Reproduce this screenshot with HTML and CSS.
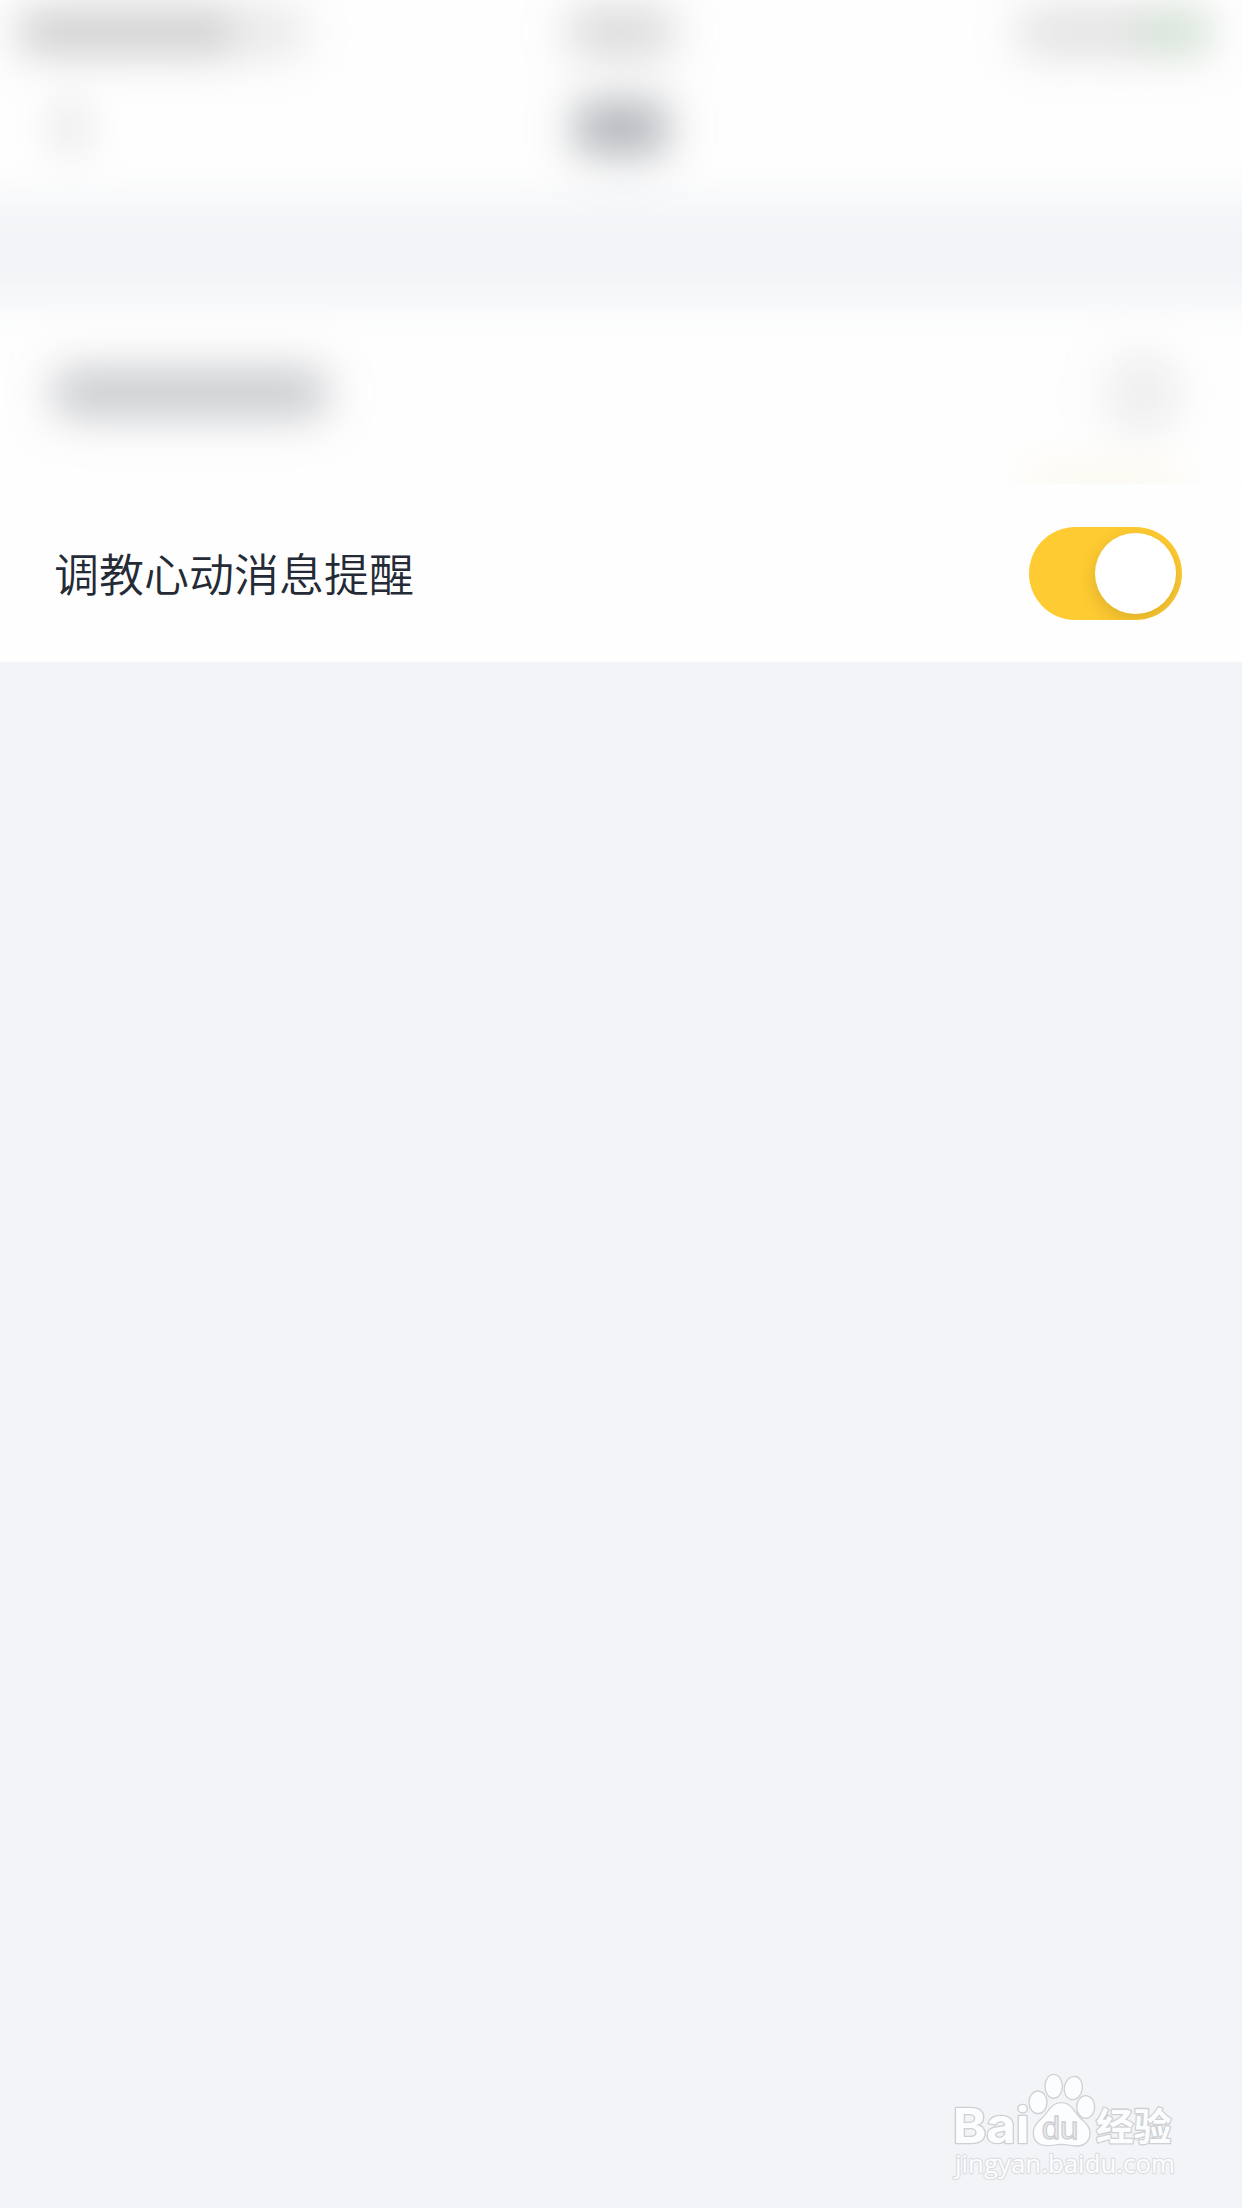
FILE: index.html
```
<!DOCTYPE html>
<html lang="zh-CN">
<head>
    <meta charset="UTF-8">
    <meta name="viewport" content="width=device-width, initial-scale=1.0">
    <title>消息提醒</title>
    <link rel="stylesheet" href="styles.css">
</head>
<body>
    <div class="page">
        <!-- Blurred top area -->
        <div class="frosted">
            <div class="frosted-content">
                <div class="status-bar">
                    <div class="status-left">
                        <span class="smudge carrier"></span>
                        <span class="smudge network"></span>
                    </div>
                    <span class="smudge time"></span>
                    <div class="status-right">
                        <span class="smudge signal"></span>
                        <span class="smudge battery"></span>
                    </div>
                </div>
                <div class="nav-bar">
                    <span class="smudge back"></span>
                    <span class="smudge title"></span>
                    <span class="nav-space"></span>
                </div>
                <div class="gap"></div>
                <div class="hidden-row">
                    <span class="smudge row-label"></span>
                    <span class="smudge row-knob"></span>
                </div>
                <div class="glow"></div>
            </div>
        </div>

        <!-- Setting row -->
        <div class="row">
            <span class="label">调教心动消息提醒</span>
            <div class="switch">
                <div class="knob"></div>
            </div>
        </div>

        <!-- Watermark -->
        <svg class="watermark" viewBox="0 0 810 450">
            <g class="mark">
                <text class="bai" x="68" y="279" textLength="231" lengthAdjust="spacingAndGlyphs">Bai</text>
                <ellipse cx="324" cy="157" rx="25" ry="32"/>
                <ellipse cx="371" cy="109" rx="24" ry="34"/>
                <ellipse cx="430" cy="114" rx="25" ry="33" transform="rotate(10 430 114)"/>
                <ellipse cx="467" cy="171" rx="25" ry="32"/>
                <path d="M394 160 C421 160 431 184 447 203 C465 220 478 229 478 250 C478 274 461 287 438 286 C421 285 411 281 395 281 C379 281 369 285 350 285 C327 285 312 272 312 249 C312 227 326 217 341 202 C358 184 367 160 394 160 Z"/>
                <text class="jingyan" x="498" y="270" textLength="226" lengthAdjust="spacingAndGlyphs">经验</text>
                <text class="url" x="75" y="370" textLength="660" lengthAdjust="spacingAndGlyphs">jingyan.baidu.com</text>
            </g>
            <text class="du" x="335" y="267" textLength="110" lengthAdjust="spacingAndGlyphs">du</text>
        </svg>
    </div>
</body>
</html>
```
FILE: styles.css
```
body {
    margin: 0;
    padding: 0;
    background-color: #f2f4f8;
    font-family: "Noto Sans CJK SC", sans-serif;
}

.page {
    position: relative;
    height: 2208px;
    overflow: hidden;
}

.frosted {
    height: 483px;
    overflow: hidden;
    border-bottom: 1px solid #fbfbfb;
    background-color: #fefefe;
}

.frosted-content {
    filter: blur(20px);
}

.smudge {
    display: block;
    border-radius: 10px;
    box-shadow: 0 0 30px 14px rgba(80, 84, 92, 0.06);
}

.status-bar {
    display: grid;
    grid-template-columns: 1fr auto 1fr;
    align-items: center;
    height: 64px;
    padding: 0 22px;
}

.status-left,
.status-right {
    display: flex;
    align-items: center;
}

.status-right {
    justify-content: flex-end;
    padding-right: 14px;
}

.carrier {
    width: 206px;
    height: 38px;
    background-color: #cbcbcb;
}

.network {
    width: 70px;
    height: 34px;
    background-color: #e6e6e6;
}

.time {
    width: 96px;
    height: 40px;
    background-color: #d8d8d8;
}

.signal {
    width: 120px;
    height: 34px;
    background-color: #dedede;
}

.battery {
    width: 62px;
    height: 38px;
    background-color: #cedfcf;
}

.nav-bar {
    display: flex;
    align-items: center;
    justify-content: space-between;
    box-sizing: border-box;
    height: 134px;
    padding: 0 58px 6px;
}

.back,
.nav-space {
    width: 24px;
}

.back {
    height: 48px;
    background-color: #dfe1e1;
    box-shadow: 0 0 20px 8px rgba(80, 84, 92, 0.03);
}

.title {
    width: 88px;
    height: 50px;
    background-color: #b1b4b9;
}

/* wider than the page so that the blur doesn't fade its ends */
.gap {
    height: 104px;
    margin: 0 -80px;
    background-color: #f2f4f7;
}

.hidden-row {
    display: flex;
    align-items: center;
    justify-content: space-between;
    height: 182px;
    padding: 0 66px 0 57px;
}

.row-label {
    width: 266px;
    height: 42px;
    background-color: #c6c8cc;
}

.row-knob {
    width: 62px;
    height: 76px;
    border-radius: 31px;
    background-color: #ededed;
    box-shadow: -16px 4px 30px 14px rgba(80, 80, 80, 0.025);
}

.glow {
    width: 150px;
    height: 20px;
    margin: -14px 62px 0 auto;
    background-color: #fcf6e6;
}

.row {
    display: flex;
    align-items: center;
    justify-content: space-between;
    box-sizing: border-box;
    height: 178px;
    padding: 0 60px 0 54px;
    background-color: #fefefe;
}

.label {
    color: #252b36;
    font-size: 45px;
    font-weight: 350;
    line-height: 60px;
}

.switch {
    display: flex;
    align-items: center;
    justify-content: flex-end;
    box-sizing: border-box;
    width: 153px;
    height: 93px;
    padding: 6px;
    overflow: hidden;
    border-radius: 47px;
    background-color: #ffcb32;
}

.knob {
    width: 81px;
    height: 81px;
    border-radius: 50%;
    background-color: #fff;
    box-shadow: 0 6px 18px rgba(0, 0, 0, 0.14);
}

.watermark {
    position: absolute;
    right: 42px;
    bottom: 8px;
    width: 270px;
    height: 150px;
}

.mark {
    fill: #fcfdfe;
    stroke: #cfd0d3;
    stroke-width: 8px;
    stroke-linejoin: round;
    paint-order: stroke;
}

.bai {
    font-family: Inter, sans-serif;
    font-size: 146px;
    font-weight: bold;
}

.jingyan {
    font-family: "Noto Sans CJK SC", sans-serif;
    font-size: 114px;
    font-weight: bold;
}

.url {
    font-family: "Open Sans", sans-serif;
    font-size: 76px;
    stroke: #dddee1;
    stroke-width: 7px;
}

.du {
    fill: #eeeff1;
    stroke: #cdced1;
    stroke-width: 4px;
    font-family: "Liberation Sans", sans-serif;
    font-size: 94px;
}
```
